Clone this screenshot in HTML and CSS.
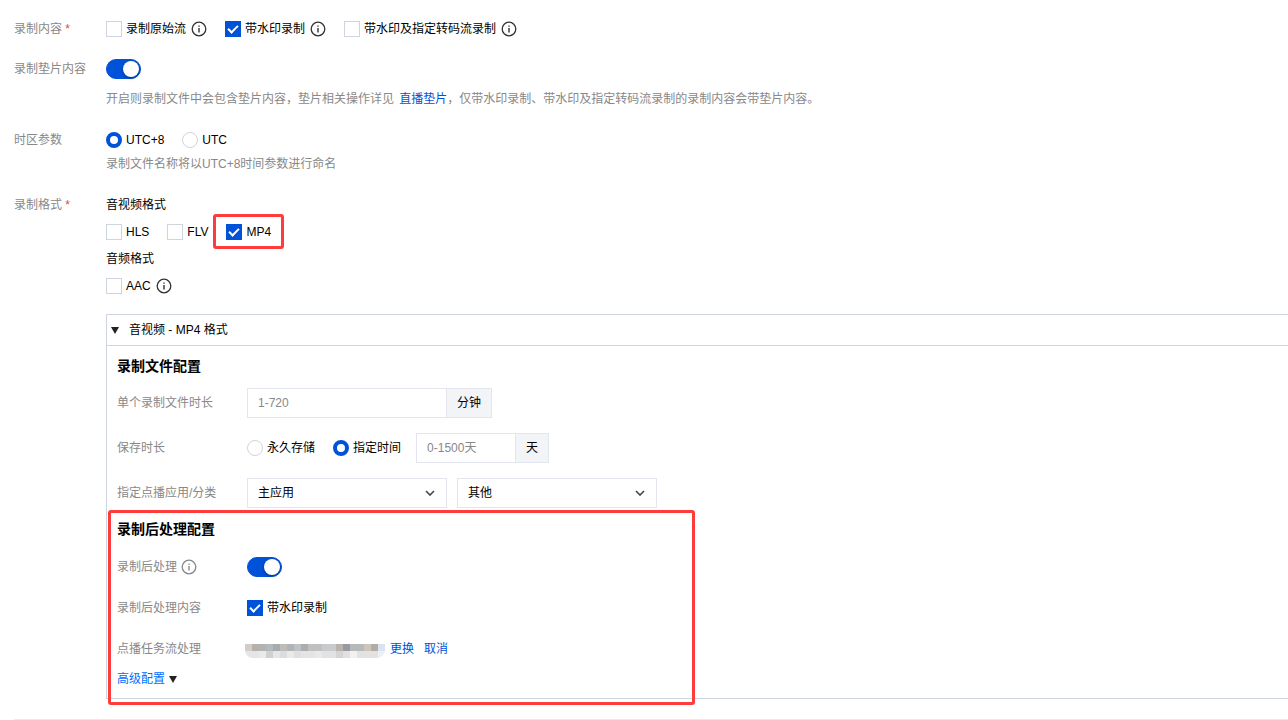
FILE: index.html
```html
<!DOCTYPE html>
<html lang="zh-CN">
<head>
  <meta charset="utf-8">
  <title>录制配置</title>
  <link rel="stylesheet" href="styles.css">
</head>
<body>
  <svg class="sprite" width="0" height="0">
    <symbol id="icon-info" viewBox="0 0 16 16">
      <circle cx="8" cy="8" r="6.8" fill="none" stroke="currentColor" stroke-width="1.3"/>
      <path d="M7.3 4.4h1.4v1.4H7.3zM7.3 7h1.4v4.6H7.3z" fill="currentColor"/>
    </symbol>
  </svg>

  <form class="form">
    <div class="form-item">
      <div class="form-label">录制内容 <span class="required">*</span></div>
      <div class="form-content">
        <div class="options">
          <label class="option"><input type="checkbox">录制原始流<svg class="info"><use href="#icon-info"/></svg></label>
          <label class="option"><input type="checkbox" checked>带水印录制<svg class="info"><use href="#icon-info"/></svg></label>
          <label class="option"><input type="checkbox">带水印及指定转码流录制<svg class="info"><use href="#icon-info"/></svg></label>
        </div>
      </div>
    </div>

    <div class="form-item">
      <label class="form-label" for="padding">录制垫片内容</label>
      <div class="form-content">
        <div class="options"><input class="switch" type="checkbox" id="padding" checked></div>
        <p class="hint spaced">开启则录制文件中会包含垫片内容，垫片相关操作详见 <a href="#">直播垫片</a>，仅带水印录制、带水印及指定转码流录制的录制内容会带垫片内容。</p>
      </div>
    </div>

    <div class="form-item">
      <div class="form-label">时区参数</div>
      <div class="form-content">
        <div class="options">
          <label class="option"><input type="radio" name="tz" checked>UTC+8</label>
          <label class="option"><input type="radio" name="tz">UTC</label>
        </div>
        <p class="hint">录制文件名称将以UTC+8时间参数进行命名</p>
      </div>
    </div>

    <div class="form-item">
      <div class="form-label">录制格式 <span class="required">*</span></div>
      <div class="form-content formats">
        <div>音视频格式</div>
        <div class="options">
          <label class="option"><input type="checkbox">HLS</label>
          <label class="option"><input type="checkbox">FLV</label>
          <label class="option marked"><input type="checkbox" checked>MP4</label>
        </div>
        <div>音频格式</div>
        <div class="options">
          <label class="option"><input type="checkbox">AAC<svg class="info"><use href="#icon-info"/></svg></label>
        </div>
      </div>
    </div>

    <section class="panel">
      <button class="panel-header" type="button">
        <svg class="caret" viewBox="0 0 8 7"><path d="M0 0h8L4 7z"/></svg>
        音视频 - MP4 格式
      </button>
      <div class="panel-body">
        <h3>录制文件配置</h3>
        <div class="fields">
          <div class="field">
            <label class="field-label" for="duration">单个录制文件时长</label>
            <div class="input-group">
              <input class="input" type="text" id="duration" placeholder="1-720"><span class="addon">分钟</span>
            </div>
          </div>
          <div class="field">
            <div class="field-label">保存时长</div>
            <div class="options">
              <label class="option"><input type="radio" name="keep">永久存储</label>
              <label class="option"><input type="radio" name="keep" checked>指定时间</label>
            </div>
            <div class="input-group days">
              <input class="input short" type="text" aria-label="保存天数" placeholder="0-1500天"><span class="addon">天</span>
            </div>
          </div>
          <div class="field">
            <label class="field-label" for="app">指定点播应用/分类</label>
            <div class="selects">
              <div class="select">
                <select id="app"><option>主应用</option></select>
                <svg viewBox="0 0 10 6"><path d="M1 1l4 4 4-4"/></svg>
              </div>
              <div class="select">
                <select aria-label="分类"><option>其他</option></select>
                <svg viewBox="0 0 10 6"><path d="M1 1l4 4 4-4"/></svg>
              </div>
            </div>
          </div>
        </div>

        <div class="post marked">
          <h3>录制后处理配置</h3>
          <div class="post-fields">
            <div class="field">
              <label class="field-label" for="post">录制后处理<svg class="info"><use href="#icon-info"/></svg></label>
              <input class="switch" type="checkbox" id="post" checked>
            </div>
            <div class="field">
              <div class="field-label">录制后处理内容</div>
              <label class="option"><input type="checkbox" checked>带水印录制</label>
            </div>
            <div class="field">
              <div class="field-label">点播任务流处理</div>
              <svg class="mosaic" viewBox="0 0 20 2" shape-rendering="crispEdges">
                <path fill="#d0cdca" d="M0 0h1v1H0z"/><path fill="#b6b1aa" d="M1 0h1v1H1z"/>
                <path fill="#b1b4b5" d="M2 0h1v1H2z"/><path fill="#b6b9bc" d="M3 0h1v1H3z"/>
                <path fill="#a8abad" d="M4 0h1v1H4z"/><path fill="#bdbcb9" d="M5 0h1v1H5z"/>
                <path fill="#b1b3b4" d="M6 0h1v1H6z"/><path fill="#bfc2c4" d="M7 0h1v1H7z"/>
                <path fill="#adadab" d="M8 0h1v1H8z"/><path fill="#bfc0bf" d="M9 0h2v1H9z"/>
                <path fill="#c9cacb" d="M11 0h2v1h-2z"/><path fill="#b9b3ae" d="M13 0h1v1h-1z"/>
                <path fill="#989aa1" d="M14 0h1v1h-1z"/><path fill="#b6b8ba" d="M15 0h2v1h-2z"/>
                <path fill="#cdc4bc" d="M17 0h1v1h-1z"/><path fill="#b1aca6" d="M18 0h1v1h-1z"/>
                <path fill="#d8e4f0" d="M19 0h1v1h-1z"/>
                <path fill="#e5e5e5" d="M0 1h2v1H0z"/><path fill="#eaeaea" d="M2 1h1v1H2z"/>
                <path fill="#cfd0d1" d="M3 1h1v1H3z"/><path fill="#e5e6e8" d="M4 1h1v1H4z"/>
                <path fill="#dadce0" d="M5 1h1v1H5z"/><path fill="#edeae6" d="M6 1h1v1H6z"/>
                <path fill="#dedfe0" d="M7 1h1v1H7z"/><path fill="#e3e4e5" d="M8 1h2v1H8z"/>
                <path fill="#ebe9e7" d="M10 1h1v1h-1z"/><path fill="#e1e2e3" d="M11 1h2v1h-2z"/>
                <path fill="#d6d3d1" d="M13 1h1v1h-1z"/><path fill="#e0e0e4" d="M14 1h1v1h-1z"/>
                <path fill="#f2f2f3" d="M15 1h1v1h-1z"/><path fill="#e3e2e1" d="M16 1h3v1h-3z"/>
                <path fill="#eaf0f6" d="M19 1h1v1h-1z"/>
              </svg>
              <div class="links"><a href="#">更换</a><a href="#">取消</a></div>
            </div>
          </div>
          <a class="advanced" href="#">高级配置<svg class="caret" viewBox="0 0 8 7"><path d="M0 0h8L4 7z"/></svg></a>
        </div>
      </div>
    </section>
  </form>
</body>
</html>
```

FILE: styles.css
```css
*,
*::before,
*::after {
  box-sizing: border-box;
}

body {
  margin: 0;
  padding: 19px 0 0 14px;
  background: #fff;
  color: #000;
  font: 12px/20px "Liberation Sans", "Noto Sans CJK SC", sans-serif;
}

.sprite {
  position: absolute;
}

h3,
p {
  margin: 0;
}

a {
  color: #0052d9;
  text-decoration: none;
}

.form {
  padding-bottom: 20px;
  border-bottom: 1px solid #e7eaef;
}

.form-item {
  display: flex;
  margin-bottom: 20px;
}

.form-label {
  flex: 0 0 92px;
  color: #888;
}

.required {
  color: #e54545;
}

.form-content {
  flex: 1;
}

.formats {
  display: grid;
  gap: 7px;
}

.hint {
  margin-top: 3px;
  line-height: 22px;
  color: #888;
}

.hint.spaced {
  margin-top: 9px;
}

.hint a {
  margin-left: 2px;
}

.options {
  display: flex;
  gap: 18px;
}

.option {
  display: flex;
  align-items: center;
  height: 20px;
  gap: 4px;
}

.info {
  width: 16px;
  height: 16px;
  margin-left: 1px;
  color: #333;
}

input[type="checkbox"],
input[type="radio"] {
  appearance: none;
  flex: none;
  width: 16px;
  height: 16px;
  margin: 0;
  border: 1px solid #cfd5de;
  background: #fff;
}

input[type="radio"] {
  border-radius: 50%;
}

input[type="radio"]:checked {
  border: 4px solid #0052d9;
}

input[type="checkbox"]:checked {
  border-color: #0052d9;
  background: #0052d9;
}

.option input[type="checkbox"]:checked::before {
  content: "";
  display: block;
  width: 10px;
  height: 6px;
  margin: 3px 0 0 2px;
  border: solid #fff;
  border-width: 0 0 2px 2px;
  transform: rotate(-45deg);
}

input.switch[type="checkbox"] {
  width: 35px;
  height: 20px;
  border-radius: 10px;
}

.switch::before {
  content: "";
  display: block;
  width: 16px;
  height: 16px;
  margin: 1px 0 0 16px;
  border-radius: 50%;
  background: #fff;
  box-shadow: 0 1px 3px rgba(0, 0, 0, 0.4);
}

/* red callout frames */
.marked {
  position: relative;
}

.marked::after {
  content: "";
  position: absolute;
  border: 3px solid #ff3b3b;
  border-radius: 3px;
  pointer-events: none;
}

.option.marked::after {
  inset: -8px -13px -7px;
}

.post.marked::after {
  top: -9px;
  bottom: -16px;
  left: -9px;
  width: 587px;
}

.panel {
  margin: -2px 0 0 92px;
  border: 1px solid #cfd5de;
  border-right: 0;
}

.panel-header {
  display: flex;
  align-items: center;
  gap: 10px;
  width: 100%;
  height: 31px;
  padding: 0 4px;
  border: 0;
  border-bottom: 1px solid #cfd5de;
  background: none;
  color: #000;
  font: inherit;
}

.caret {
  width: 8px;
  height: 7px;
  fill: #222;
}

.panel-body {
  padding: 10px 10px 9px;
}

h3 {
  font-size: 14px;
  line-height: 20px;
}

.fields {
  display: grid;
  gap: 15px;
  margin: 12px 0 11px;
}

.field {
  display: flex;
  align-items: center;
}

.field-label {
  display: flex;
  align-items: center;
  gap: 4px;
  flex: 0 0 130px;
  color: #888;
}

.field-label .info {
  margin-left: 0;
  color: #888;
}

.input-group {
  display: flex;
}

.input-group.days {
  margin-left: 15px;
}

.input {
  width: 200px;
  height: 30px;
  padding: 0 10px;
  border: 1px solid #e3e6ee;
  border-radius: 0;
  font: inherit;
}

.input.short {
  width: 100px;
}

.input::placeholder {
  color: #888;
}

.addon {
  height: 30px;
  margin-left: -1px;
  padding: 0 10px;
  border: 1px solid #e3e6ee;
  background: #f3f4f8;
  line-height: 28px;
}

.selects {
  display: flex;
  gap: 10px;
}

.select {
  position: relative;
}

.select select {
  appearance: none;
  display: block;
  width: 200px;
  height: 30px;
  padding: 0 10px;
  border: 1px solid #e3e6ee;
  border-radius: 0;
  background: #fff;
  color: #000;
  font: inherit;
}

.select svg {
  position: absolute;
  top: 12px;
  right: 12px;
  width: 10px;
  height: 6px;
  fill: none;
  stroke: #444;
  stroke-width: 1.6;
  pointer-events: none;
}

.post-fields {
  display: grid;
  gap: 21px;
  margin: 18px 0 10px;
}

.mosaic {
  width: 140px;
  height: 14px;
  margin: 4px 0 0 -2px;
  border-radius: 0 0 8px 8px;
}

.links {
  display: flex;
  gap: 10px;
  margin-left: 5px;
}

.advanced {
  display: inline-flex;
  align-items: center;
  gap: 4px;
  color: #006eff;
  vertical-align: top;
}
```
